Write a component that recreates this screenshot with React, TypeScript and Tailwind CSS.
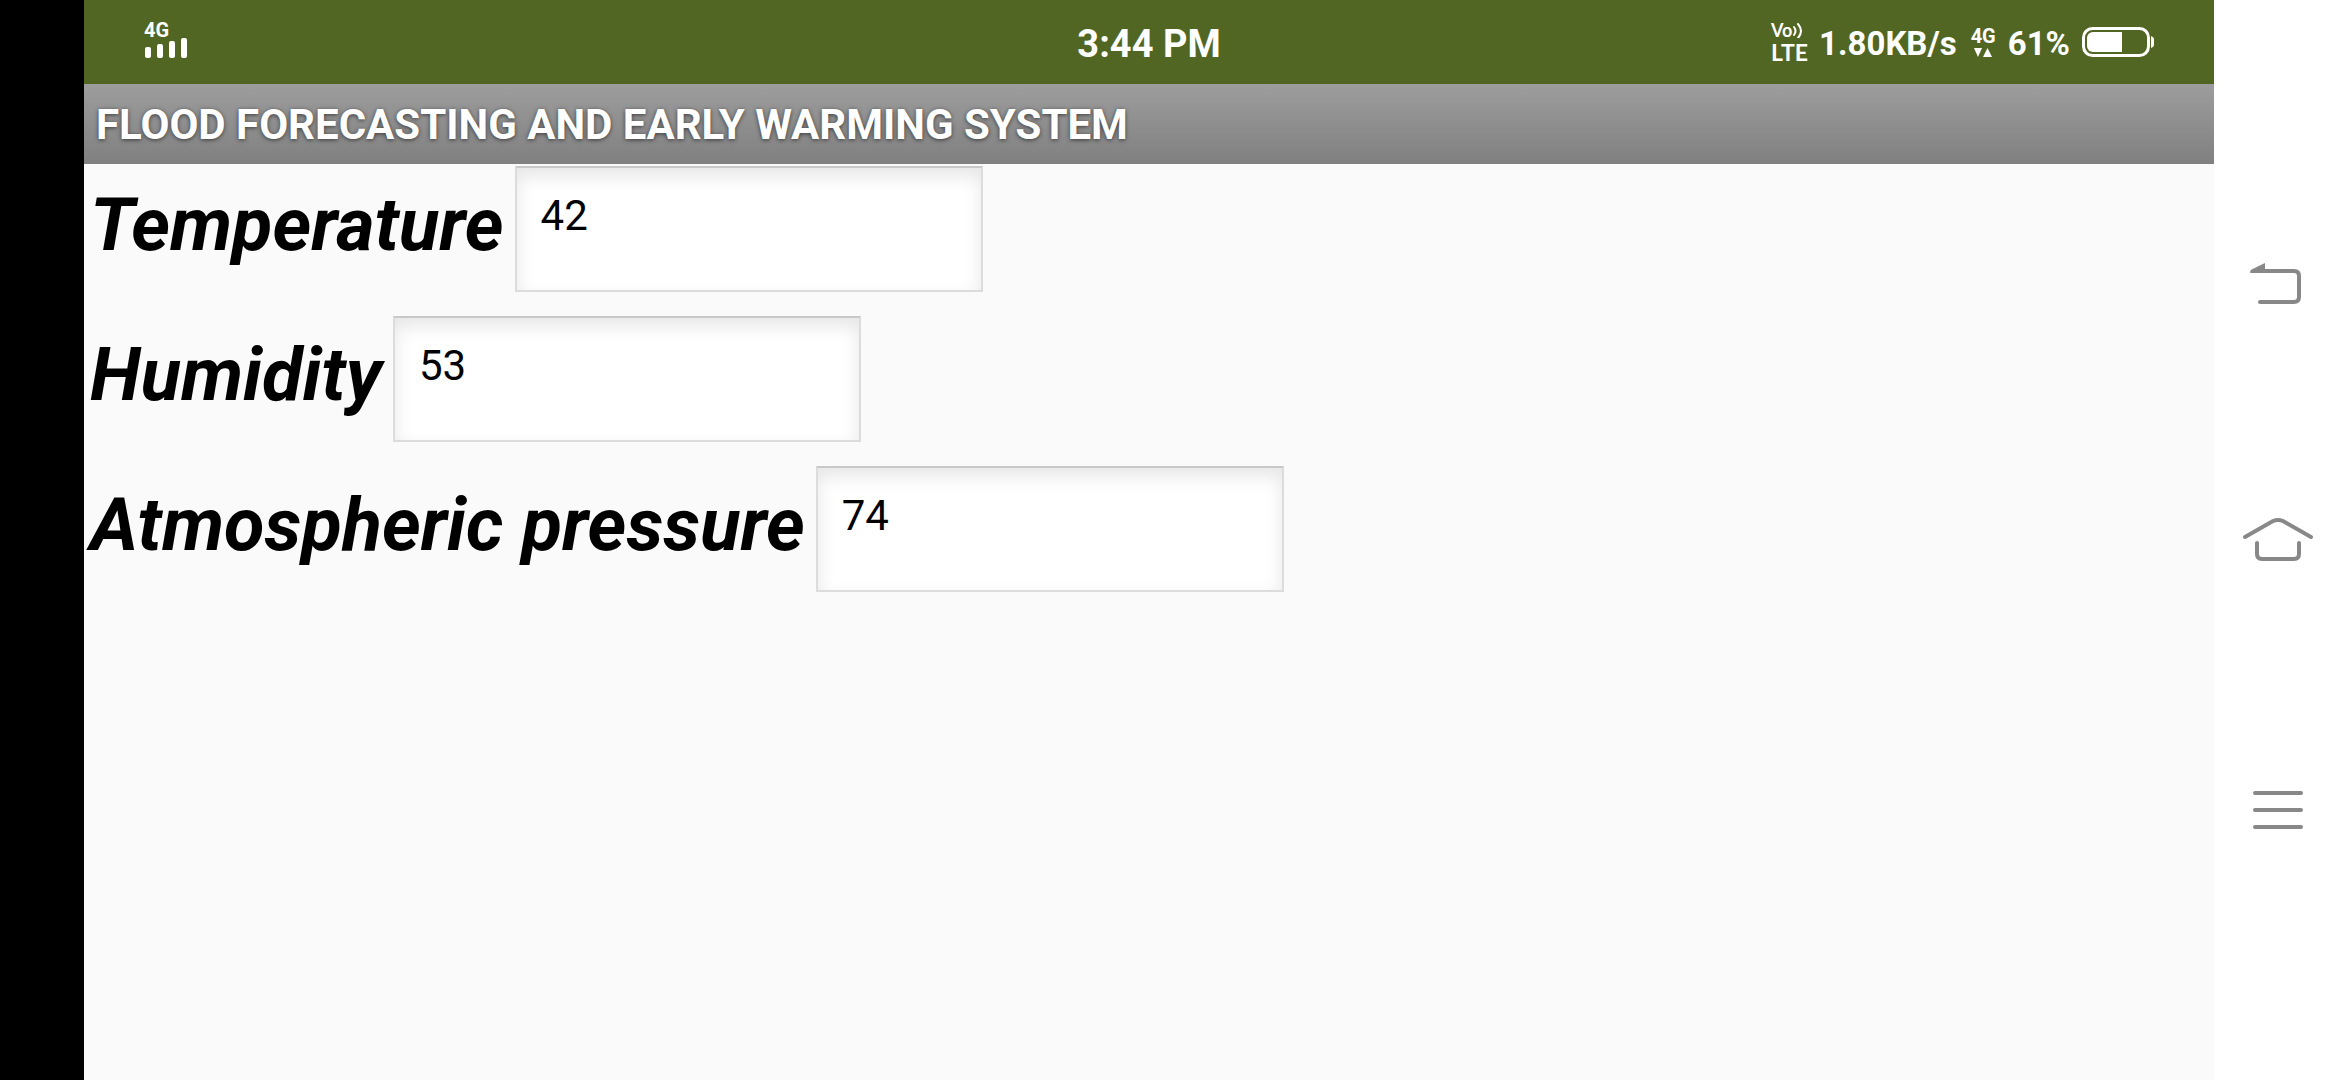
import { useState } from "react";

function SignalBars() {
  return (
    <svg width="44" height="20" viewBox="0 0 44 20" fill="#fff" aria-hidden="true">
      <rect x="1" y="9" width="6" height="11" rx="2" />
      <rect x="13" y="6" width="6" height="14" rx="2" />
      <rect x="25" y="3" width="6" height="17" rx="2" />
      <rect x="37" y="0" width="6" height="20" rx="2" />
    </svg>
  );
}

function VoLte() {
  return (
    <div className="flex w-9 flex-col font-['Lato'] font-bold">
      <div className="flex h-5 items-center">
        <span className="text-[18px] leading-5">Vo</span>
        <svg width="12" height="16" viewBox="0 0 12 16" fill="none" stroke="#fff" strokeWidth="2" strokeLinecap="round" aria-hidden="true">
          <path d="M2 5q3 4 0 8" />
          <path d="M6 2q6 7 0 14" />
        </svg>
      </div>
      <span className="text-[23px] leading-6">LTE</span>
    </div>
  );
}

function DataArrows() {
  return (
    <svg width="18" height="9" viewBox="0 0 18 9" fill="#fff" aria-hidden="true">
      <path d="M0 0h8L4 9z" />
      <path d="M9 9h9L13.500 0z" />
    </svg>
  );
}

function Battery() {
  return (
    <svg width="72" height="30" viewBox="0 0 72 30" aria-hidden="true">
      <rect x="1.500" y="1.500" width="65" height="27" rx="9" fill="none" stroke="#fff" strokeWidth="3" />
      <path d="M11 5h29v20H11a6 6 0 0 1-6-6v-8a6 6 0 0 1 6-6z" fill="#fff" />
      <path d="M69 9q3 1 3 3v6q0 2-3 3z" fill="#fff" />
    </svg>
  );
}

function StatusBar() {
  return (
    <header className="grid h-21 grid-cols-[1fr_auto_1fr] items-center bg-[#526623] px-15 font-bold text-white">
      <div className="flex flex-col items-start pb-1">
        <span className="text-[20px] leading-4">4G</span>
        <SignalBars />
      </div>
      <time className="pt-1 text-[38px] leading-10">3:44 PM</time>
      <div className="flex items-center justify-end gap-3">
        <VoLte />
        <span className="pt-1 text-[33px] leading-10">1.80KB/s</span>
        <div className="flex flex-col items-center gap-1 pl-0.5">
          <span className="text-[20px] leading-4">4G</span>
          <DataArrows />
        </div>
        <span className="pt-1 text-[33px] leading-10">61%</span>
        <Battery />
      </div>
    </header>
  );
}

function Reading({ id, label, initial }: { id: string; label: string; initial: string }) {
  const [value, setValue] = useState(initial);
  return (
    <div className="flex items-start gap-[11px]">
      <label htmlFor={id} className="pt-[11px] text-[74px] leading-24 font-bold text-black italic">
        {label}
      </label>
      <input
        id={id}
        type="text"
        inputMode="decimal"
        value={value}
        onChange={(e) => setValue(e.target.value)}
        className="h-[126px] w-[468px] border-2 border-[#dcdcdc] border-t-[#c8c8c8] bg-white px-6 pb-7 text-[42px] text-black shadow-[inset_0_8px_18px_rgba(0,0,0,0.10)] outline-none"
      />
    </div>
  );
}

const navButton = "flex h-20 w-20 items-center justify-center";

function NavigationBar() {
  return (
    <nav className="grid w-[126px] shrink-0 grid-rows-3 place-items-center bg-white py-[12.5vh]">
      <button type="button" aria-label="Back" className={navButton}>
        <svg width="80" height="80" viewBox="0 0 80 80" fill="none" stroke="#888" strokeWidth="4" strokeLinecap="round">
          <path d="M26 41h31q5 0 5 5v21q0 5-5 5H23" />
          <path d="M13 42.500q0-2 1.500-3L28 33v10H14z" fill="#888" stroke="none" />
        </svg>
      </button>
      <button type="button" aria-label="Home" className={navButton}>
        <svg width="80" height="80" viewBox="0 0 80 80" fill="none" stroke="#888" strokeWidth="4" strokeLinecap="round">
          <path d="M8 37L36 21q5-2 10 0L74 37" />
          <path d="M20 43v11q0 5 5 5h32q5 0 5-5V43" />
        </svg>
      </button>
      <button type="button" aria-label="Recent apps" className={navButton}>
        <svg width="80" height="80" viewBox="0 0 80 80" fill="none" stroke="#888" strokeWidth="4" strokeLinecap="round">
          <path d="M18 23h46M18 40h46M18 57h46" />
        </svg>
      </button>
    </nav>
  );
}

export default function App() {
  return (
    <div className="flex min-h-screen bg-[#fafafa] font-['Roboto',sans-serif]">
      <div className="w-21 shrink-0 bg-black" />
      <div className="flex min-w-0 flex-1 flex-col">
        <StatusBar />
        <h1 className="h-20 bg-linear-to-b from-[#9d9d9d] to-[#808080] px-3 pt-px text-[42px] leading-20 font-bold text-white text-shadow-[0_1px_4px_rgba(0,0,0,0.6)]">
          FLOOD FORECASTING AND EARLY WARMING SYSTEM
        </h1>
        <main className="flex flex-col gap-6 px-1.5 pt-0.5">
          <Reading id="temperature" label="Temperature" initial="42" />
          <Reading id="humidity" label="Humidity" initial="53" />
          <Reading id="pressure" label="Atmospheric pressure" initial="74" />
        </main>
      </div>
      <NavigationBar />
    </div>
  );
}
